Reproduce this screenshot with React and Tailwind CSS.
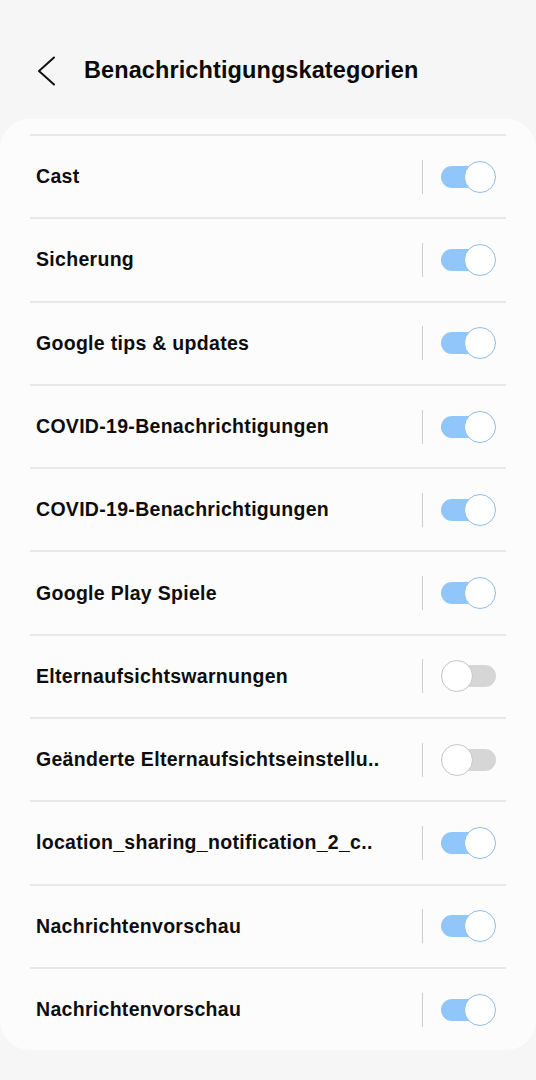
import React from "react";

const rows = [
  { label: "Cast", on: true },
  { label: "Sicherung", on: true },
  { label: "Google tips & updates", on: true },
  { label: "COVID-19-Benachrichtigungen", on: true },
  { label: "COVID-19-Benachrichtigungen", on: true },
  { label: "Google Play Spiele", on: true },
  { label: "Elternaufsichtswarnungen", on: false },
  { label: "Geänderte Elternaufsichtseinstellu..", on: false },
  { label: "location_sharing_notification_2_c..", on: true },
  { label: "Nachrichtenvorschau", on: true },
  { label: "Nachrichtenvorschau", on: true },
];

function Toggle({ on }) {
  return (
    <div className="relative w-[55px] h-[32px]">
      {on ? (
        <>
          <div className="absolute left-0 top-[5px] w-[48px] h-[22px] rounded-full bg-[#90c6f9]" />
          <div className="absolute right-0 top-0 w-[32px] h-[32px] rounded-full bg-white border-[1.5px] border-[#8fbde3]" />
        </>
      ) : (
        <>
          <div className="absolute right-0 top-[5px] w-[48px] h-[22px] rounded-full bg-[#d6d6d6]" />
          <div className="absolute left-0 top-0 w-[32px] h-[32px] rounded-full bg-white border-[1.5px] border-[#c6c6c6]" />
        </>
      )}
    </div>
  );
}

export default function App() {
  return (
    <div
      className="w-[536px] h-[1080px] bg-[#f6f6f6] overflow-hidden"
      style={{ fontFamily: '"Liberation Sans", Arial, sans-serif' }}
    >
      <div className="mt-[35px] h-[72px] flex items-center">
        <svg className="ml-[37px]" width="19" height="30" viewBox="0 0 19 30" fill="none">
          <polyline points="17,1.5 2,15 17,28.5" stroke="#111" strokeWidth="2" strokeLinecap="round" strokeLinejoin="round" />
        </svg>
        <div className="ml-[28px] text-[23.5px] font-bold text-[#0a0a0a] tracking-[0.1px]">
          Benachrichtigungskategorien
        </div>
      </div>
      <div className="mt-[12px] bg-[#fcfcfc] rounded-[30px] px-[30px] pt-[15px]">
        {rows.map((r, i) => (
          <div
            key={i}
            className="h-[83.3px] border-t-2 border-[#e8e8e8] flex items-center justify-between"
          >
            <div className="pl-[6px] text-[19.5px] font-bold text-[#0d0d0d] tracking-[0.3px] whitespace-nowrap">
              {r.label}
            </div>
            <div className="flex items-center pr-[10px]">
              <div className="w-[1.5px] h-[34px] bg-[#cdcdcd] mr-[18px]" />
              <Toggle on={r.on} />
            </div>
          </div>
        ))}
      </div>
    </div>
  );
}
